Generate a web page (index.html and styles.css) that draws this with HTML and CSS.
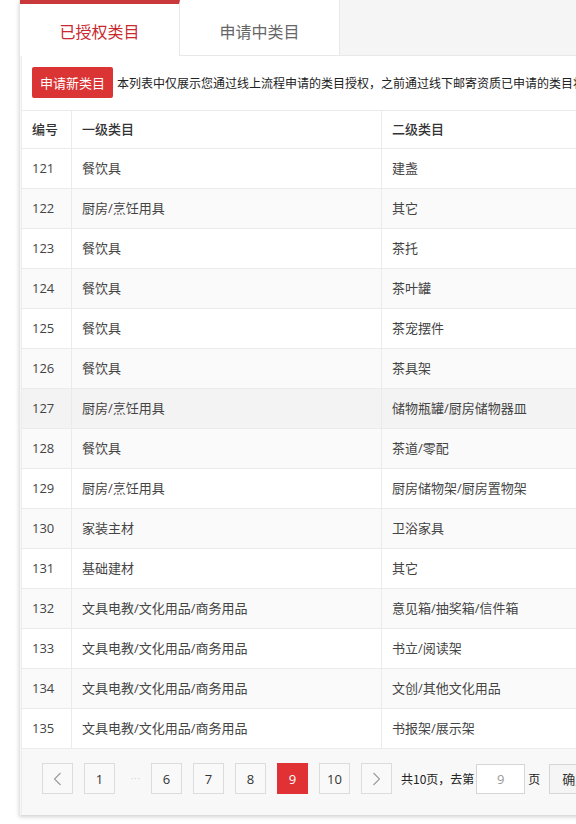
FILE: index.html
```html
<!DOCTYPE html>
<html lang="zh-CN">
<head>
<meta charset="utf-8">
<title>类目管理</title>
<link rel="stylesheet" href="styles.css">
</head>
<body>
<div class="panel">
  <div class="tabs">
    <div class="tab active">已授权类目</div>
    <div class="tab">申请中类目</div>
    <div class="tab-fill"></div>
  </div>
  <div class="content">
    <div class="toolbar">
      <button class="btn-apply">申请新类目</button>
      <span class="note">本列表中仅展示您通过线上流程申请的类目授权，之前通过线下邮寄资质已申请的类目将不在此处展示</span>
    </div>
    <table class="grid">
      <thead>
        <tr><th class="c1">编号</th><th class="c2">一级类目</th><th class="c3">二级类目</th></tr>
      </thead>
      <tbody>
        <tr><td>121</td><td>餐饮具</td><td>建盏</td></tr>
        <tr><td>122</td><td>厨房/烹饪用具</td><td>其它</td></tr>
        <tr><td>123</td><td>餐饮具</td><td>茶托</td></tr>
        <tr><td>124</td><td>餐饮具</td><td>茶叶罐</td></tr>
        <tr><td>125</td><td>餐饮具</td><td>茶宠摆件</td></tr>
        <tr><td>126</td><td>餐饮具</td><td>茶具架</td></tr>
        <tr class="hover"><td>127</td><td>厨房/烹饪用具</td><td>储物瓶罐/厨房储物器皿</td></tr>
        <tr><td>128</td><td>餐饮具</td><td>茶道/零配</td></tr>
        <tr><td>129</td><td>厨房/烹饪用具</td><td>厨房储物架/厨房置物架</td></tr>
        <tr><td>130</td><td>家装主材</td><td>卫浴家具</td></tr>
        <tr><td>131</td><td>基础建材</td><td>其它</td></tr>
        <tr><td>132</td><td>文具电教/文化用品/商务用品</td><td>意见箱/抽奖箱/信件箱</td></tr>
        <tr><td>133</td><td>文具电教/文化用品/商务用品</td><td>书立/阅读架</td></tr>
        <tr><td>134</td><td>文具电教/文化用品/商务用品</td><td>文创/其他文化用品</td></tr>
        <tr><td>135</td><td>文具电教/文化用品/商务用品</td><td>书报架/展示架</td></tr>
      </tbody>
    </table>
    <div class="pager">
      <span class="pg arrow"><svg width="9" height="14" viewBox="0 0 9 14"><path d="M7.5 1 L1.5 7 L7.5 13" fill="none" stroke="#9a9a9a" stroke-width="1.1"/></svg></span>
      <span class="pg">1</span>
      <span class="dots">···</span>
      <span class="pg">6</span>
      <span class="pg">7</span>
      <span class="pg">8</span>
      <span class="pg current">9</span>
      <span class="pg">10</span>
      <span class="pg arrow"><svg width="9" height="14" viewBox="0 0 9 14"><path d="M1.5 1 L7.5 7 L1.5 13" fill="none" stroke="#9a9a9a" stroke-width="1.1"/></svg></span>
      <span class="total">共10页，去第</span>
      <span class="goto">9</span>
      <span class="unit">页</span>
      <span class="confirm">确定</span>
    </div>
  </div>
</div>
</body>
</html>
```
FILE: styles.css
```css
html, body {
  margin: 0;
  padding: 0;
  background: #fff;
  overflow: hidden;
}
body {
  font-family: "Open Sans", "Noto Sans CJK SC", sans-serif;
  color: #333;
  width: 576px;
  height: 824px;
}
.panel {
  margin-left: 19px;
  width: 640px;
  height: 815px;
  border-left: 1px solid #e6e6e6;
  background: #f7f7f7;
  box-shadow: 0 2px 4px rgba(0,0,0,0.18);
  display: flex;
  flex-direction: column;
}
.tabs {
  display: flex;
  height: 56px;
  background: #f5f5f5;
}
.tab {
  width: 160px;
  box-sizing: border-box;
  background: #fff;
  border-right: 1px solid #e8e8e8;
  border-bottom: 1px solid #e8e8e8;
  display: flex;
  align-items: center;
  justify-content: center;
  font-family: "Noto Sans CJK SC", sans-serif;
  font-size: 16px;
  color: #666;
  padding-top: 6px;
}
.tab.active {
  color: #c9282e;
  border-top: 4px solid #c9393c;
  border-bottom: none;
  padding-top: 2px;
}
.tab-fill {
  flex: 1;
  border-bottom: 1px solid #e8e8e8;
}
.content {
  flex: 1;
  margin-left: 1px;
  border-left: 1px solid #ececec;
  background: #f8f8f8;
  display: flex;
  flex-direction: column;
}
.toolbar {
  height: 54px;
  box-sizing: border-box;
  padding: 11px 0 0 10px;
  background: #fff;
  display: flex;
  align-items: flex-start;
  white-space: nowrap;
  overflow: hidden;
}
.btn-apply {
  height: 31px;
  width: 81px;
  border: none;
  border-radius: 2px;
  background: #da3434;
  color: #fff;
  font-family: "Noto Sans CJK SC", sans-serif;
  font-size: 13px;
  padding: 0;
  flex: none;
}
.note {
  font-family: "Noto Sans CJK SC", sans-serif;
  font-size: 12px;
  color: #222;
  margin-left: 4px;
  line-height: 31px;
}
.grid {
  border-collapse: collapse;
  width: 100%;
  table-layout: fixed;
  font-size: 13px;
}
.grid th, .grid td {
  text-align: left;
  padding: 0 0 2px 10px;
  border-top: 1px solid #ebebeb;
  border-right: 1px solid #ebebeb;
  white-space: nowrap;
}
.grid th {
  height: 35px;
  background: #fff;
  color: #333;
  font-weight: 500;
  font-family: "Noto Sans CJK SC", sans-serif;
}
.grid td {
  height: 37px;
  color: #444;
}
.grid .c1 { width: 39px; }
.grid .c2 { width: 299px; }
.grid tbody tr { background: #fff; }
.grid tbody tr:nth-child(even) { background: #fafafa; }
.grid tbody tr.hover { background: #f3f3f3; }
.pager {
  border-top: 1px solid #ebebeb;
  padding: 14px 0 0 20px;
  display: flex;
  align-items: center;
  white-space: nowrap;
  font-size: 13px;
}
.pg {
  width: 29px;
  height: 29px;
  border: 1px solid #dcdcdc;
  background: #f9f9f9;
  display: flex;
  align-items: center;
  justify-content: center;
  color: #333;
  margin-right: 11px;
  flex: none;
}
.pg.current {
  background: #e03234;
  border-color: #e03234;
  color: #fff;
}
.dots {
  color: #c4c4c4;
  width: 20px;
  margin: 0 5px 0 0;
  text-align: center;
  font-size: 9px;
  letter-spacing: 1px;
}
.total {
  font-family: "Noto Sans CJK SC", sans-serif;
  font-size: 12px;
  margin-left: -2px;
  color: #222;
}
.goto {
  width: 47px;
  height: 28px;
  border: 1px solid #d6d6d6;
  background: #fff;
  color: #999;
  display: flex;
  align-items: center;
  justify-content: center;
  margin-left: 2px;
}
.unit {
  font-family: "Noto Sans CJK SC", sans-serif;
  font-size: 12px;
  margin-left: 3px;
  color: #222;
}
.confirm {
  font-family: "Noto Sans CJK SC", sans-serif;
  margin-left: 9px;
  height: 28px;
  padding: 0 12px;
  border: 1px solid #d6d6d6;
  background: #f5f5f5;
  display: flex;
  align-items: center;
  color: #333;
}
```
